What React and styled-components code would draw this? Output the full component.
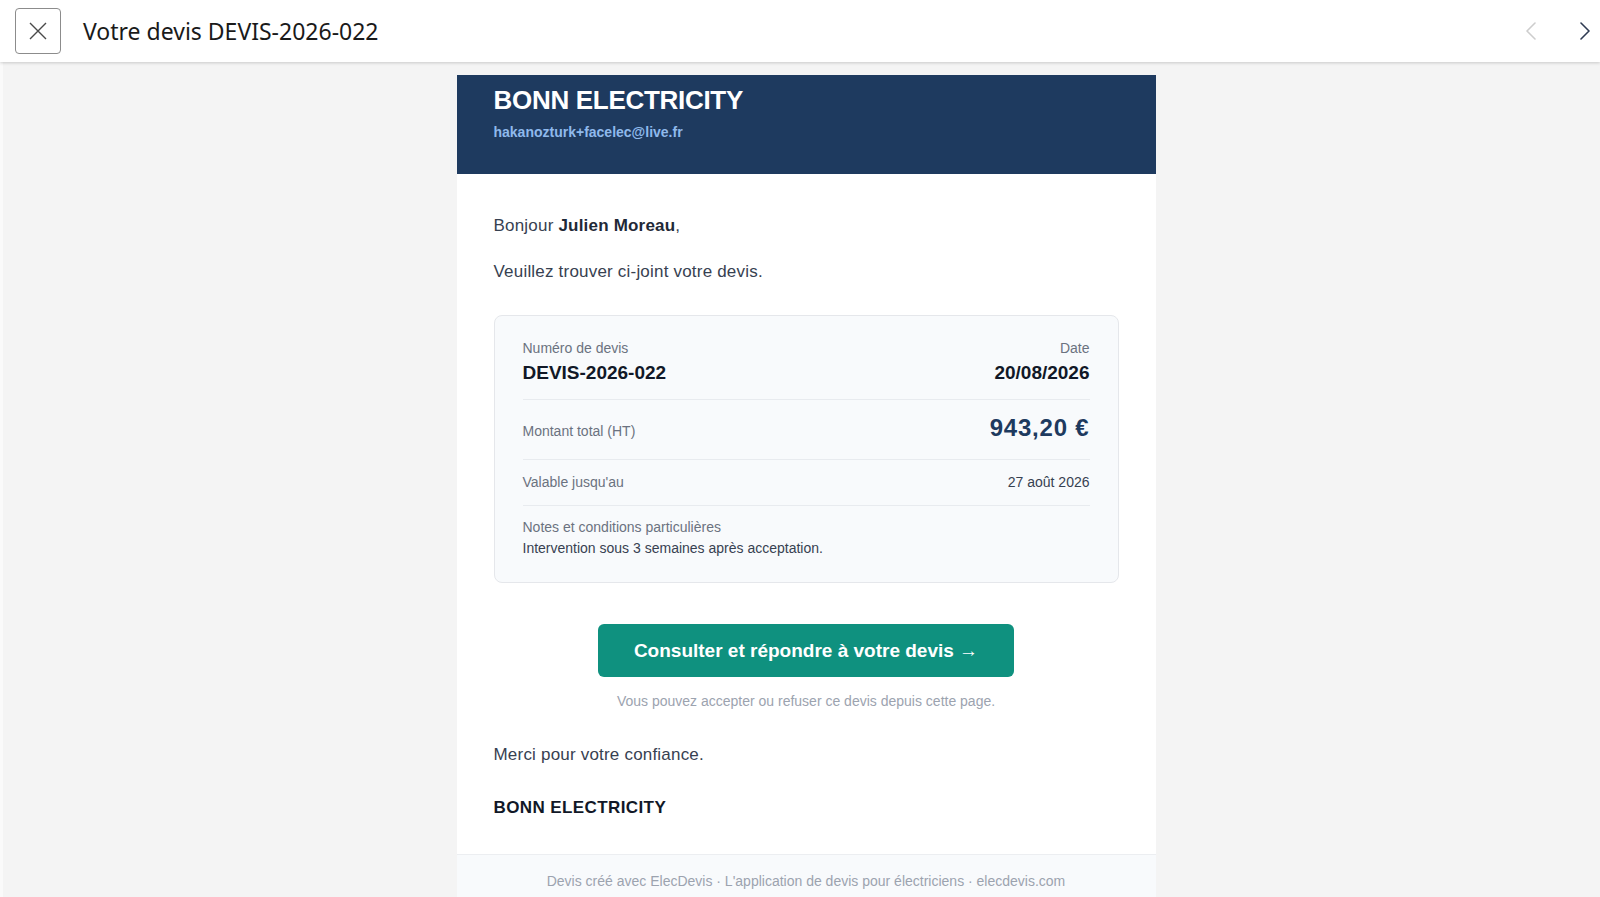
import React from 'react';
import styled, { createGlobalStyle } from 'styled-components';

const GlobalStyle = createGlobalStyle`
  html, body {
    margin: 0;
    padding: 0;
    background: #f4f4f4;
  }
  body {
    font-family: "Liberation Sans", Arial, sans-serif;
  }
  * {
    box-sizing: border-box;
  }
`;

const Page = styled.div`
  min-height: 897px;
  display: flex;
  flex-direction: column;
`;

const TopBar = styled.header`
  height: 62px;
  background: #fff;
  display: flex;
  align-items: center;
  padding: 0 0 0 15px;
  box-shadow: 0 1px 3px rgba(0, 0, 0, 0.18);
  position: relative;
  z-index: 1;
`;

const CloseButton = styled.button`
  width: 46px;
  height: 46px;
  border: 1px solid #8c8c8c;
  border-radius: 4px;
  background: #fff;
  display: flex;
  align-items: center;
  justify-content: center;
  padding: 0;
  cursor: pointer;
`;

const Title = styled.h1`
  margin: 0 0 0 22px;
  font-family: "Noto Sans", "Open Sans", sans-serif;
  font-size: 23px;
  font-weight: 400;
  color: #1a1a1a;
  flex: 1;
`;

const NavGroup = styled.div`
  display: flex;
  gap: 25px;
`;

const NavButton = styled.button`
  width: 30px;
  height: 40px;
  border: none;
  background: transparent;
  display: flex;
  align-items: center;
  justify-content: center;
  padding: 0;
  color: ${(p) => (p.$disabled ? '#cdcdcd' : '#2f3b52')};
`;

const Content = styled.main`
  flex: 1;
  display: flex;
  justify-content: center;
  padding: 13px 0 0 9px;
  border-left: 3px solid #fafafa;
`;

const Mail = styled.div`
  width: 699px;
  background: #fff;
  display: flex;
  flex-direction: column;
`;

const Brand = styled.div`
  background: #1e3a5f;
  height: 99px;
  padding: 9px 37px 0;
`;

const BrandName = styled.div`
  color: #fff;
  font-size: 26px;
  font-weight: 700;
  line-height: 32px;
  letter-spacing: -0.3px;
`;

const BrandMail = styled.div`
  color: #8fb9ec;
  font-size: 14px;
  font-weight: 700;
  line-height: 16px;
  margin-top: 8px;
`;

const Body = styled.div`
  padding: 40px 37px 34px;
  color: #374151;
`;

const Para = styled.p`
  margin: 0 0 ${(p) => p.$gap ?? 22}px;
  font-size: 17px;
  line-height: 24px;
  letter-spacing: 0.2px;
  color: #374151;

  strong {
    color: #1f2937;
    font-weight: 700;
  }
`;

const Signature = styled.p`
  margin: 0;
  font-size: 17px;
  line-height: 24px;
  font-weight: 700;
  letter-spacing: 0.4px;
  color: #111827;
`;

const Summary = styled.div`
  margin-top: 31px;
  background: #f8fafc;
  border: 1px solid #e5e7eb;
  border-radius: 8px;
  padding: 24px 28px 26px;
`;

const Row = styled.div`
  display: flex;
  justify-content: space-between;
  align-items: ${(p) => p.$align || 'baseline'};
  padding: ${(p) => p.$pad};
  border-bottom: ${(p) => (p.$last ? 'none' : '1px solid #e8ebef')};
`;

const Cell = styled.div`
  display: flex;
  flex-direction: column;
  align-items: ${(p) => (p.$right ? 'flex-end' : 'flex-start')};
`;

const Label = styled.span`
  font-size: 14px;
  line-height: 16px;
  color: #6b7280;
`;

const Strong = styled.span`
  font-size: 19px;
  line-height: 22px;
  font-weight: 700;
  color: #111827;
  margin-top: 6px;
`;

const Amount = styled.span`
  font-size: 24px;
  line-height: 28px;
  font-weight: 700;
  letter-spacing: 0.8px;
  color: #1e3a5f;
`;

const Small = styled.span`
  font-size: 14px;
  line-height: 16px;
  color: #374151;
  margin-top: ${(p) => p.$top || 0}px;
`;

const Action = styled.div`
  display: flex;
  flex-direction: column;
  align-items: center;
  margin: 41px 0 34px;
`;

const CtaButton = styled.a`
  height: 53px;
  padding: 0 36px;
  display: flex;
  align-items: center;
  background: #0f917f;
  color: #fff;
  border-radius: 6px;
  font-size: 19px;
  font-weight: 700;
  text-decoration: none;
`;

const Hint = styled.div`
  margin-top: 16px;
  font-size: 14px;
  line-height: 16px;
  color: #9ca3af;
`;

const Footer = styled.div`
  background: #f8fafc;
  border-top: 1px solid #eceef1;
  padding: 18px 0 20px;
  text-align: center;
  font-size: 14px;
  line-height: 16px;
  color: #9ca3af;
`;

const XIcon = () => (
  <svg width="18" height="18" viewBox="0 0 18 18" fill="none">
    <path d="M1 1L17 17M17 1L1 17" stroke="#4a4a4a" strokeWidth="1.4" />
  </svg>
);

const Chevron = ({ dir }) => (
  <svg width="11" height="18" viewBox="0 0 11 18" fill="none">
    <polyline
      points={dir === 'left' ? '10,1 2,9 10,17' : '1,1 9,9 1,17'}
      stroke="currentColor"
      strokeWidth="1.6"
      strokeLinecap="round"
      strokeLinejoin="round"
    />
  </svg>
);

const App = () => (
  <Page>
    <GlobalStyle />
    <TopBar>
      <CloseButton aria-label="Fermer">
        <XIcon />
      </CloseButton>
      <Title>Votre devis DEVIS-2026-022</Title>
      <NavGroup>
        <NavButton $disabled aria-label="Précédent">
          <Chevron dir="left" />
        </NavButton>
        <NavButton aria-label="Suivant">
          <Chevron dir="right" />
        </NavButton>
      </NavGroup>
    </TopBar>
    <Content>
      <Mail>
        <Brand>
          <BrandName>BONN ELECTRICITY</BrandName>
          <BrandMail>hakanozturk+facelec@live.fr</BrandMail>
        </Brand>
        <Body>
          <Para>
            Bonjour <strong>Julien Moreau</strong>,
          </Para>
          <Para $gap={0}>Veuillez trouver ci-joint votre devis.</Para>
          <Summary>
            <Row $align="flex-start" $pad="0 0 15px">
              <Cell>
                <Label>Numéro de devis</Label>
                <Strong>DEVIS-2026-022</Strong>
              </Cell>
              <Cell $right>
                <Label>Date</Label>
                <Strong>20/08/2026</Strong>
              </Cell>
            </Row>
            <Row $pad="14px 0 17px">
              <Label>Montant total (HT)</Label>
              <Amount>943,20 €</Amount>
            </Row>
            <Row $pad="14px 0 15px">
              <Label>Valable jusqu'au</Label>
              <Small>27 août 2026</Small>
            </Row>
            <Row $last $pad="13px 0 0">
              <Cell>
                <Label>Notes et conditions particulières</Label>
                <Small $top={5}>Intervention sous 3 semaines après acceptation.</Small>
              </Cell>
            </Row>
          </Summary>
          <Action>
            <CtaButton href="#">Consulter et répondre à votre devis →</CtaButton>
            <Hint>Vous pouvez accepter ou refuser ce devis depuis cette page.</Hint>
          </Action>
          <Para $gap={29}>Merci pour votre confiance.</Para>
          <Signature>BONN ELECTRICITY</Signature>
        </Body>
        <Footer>
          Devis créé avec ElecDevis · L'application de devis pour électriciens · elecdevis.com
        </Footer>
      </Mail>
    </Content>
  </Page>
);

export default App;
